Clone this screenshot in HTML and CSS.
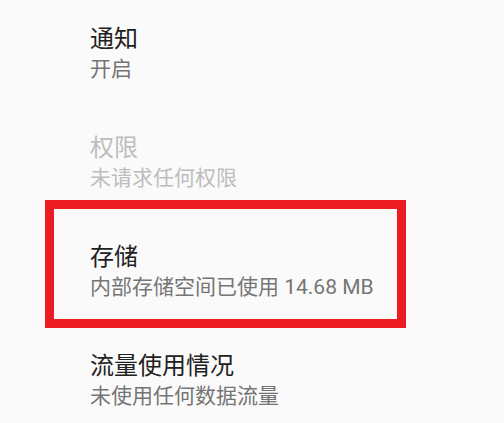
FILE: index.html
```html
<!DOCTYPE html>
<html lang="zh">
<head>
<meta charset="utf-8">
<link rel="stylesheet" href="styles.css">
</head>
<body>
<div class="list">
  <div class="row">
    <div class="title">通知</div>
    <div class="summary">开启</div>
  </div>
  <div class="row disabled">
    <div class="title">权限</div>
    <div class="summary">未请求任何权限</div>
  </div>
  <div class="row">
    <div class="highlight"></div>
    <div class="title">存储</div>
    <div class="summary">内部存储空间已使用 14.68 MB</div>
  </div>
  <div class="row">
    <div class="title">流量使用情况</div>
    <div class="summary">未使用任何数据流量</div>
  </div>
</div>
</body>
</html>
```
FILE: styles.css
```css
html, body {
  margin: 0;
  padding: 0;
  background: #fafafa;
}
body {
  width: 504px;
  height: 423px;
  overflow: hidden;
  font-family: Roboto, "Noto Sans CJK SC", sans-serif;
}
.list {
  display: flex;
  flex-direction: column;
}
.row {
  position: relative;
  height: 109px;
  box-sizing: border-box;
  padding: 23px 0 0 90px;
}
.title {
  font-size: 24px;
  line-height: 32px;
  color: #212121;
}
.summary {
  font-size: 21px;
  line-height: 28px;
  color: #757575;
}
.disabled .title,
.disabled .summary {
  color: #bdbdbd;
}
.highlight {
  position: absolute;
  left: 45px;
  top: -18px;
  width: 361px;
  height: 128px;
  box-sizing: border-box;
  border: 9px solid #ed1c24;
}
```
